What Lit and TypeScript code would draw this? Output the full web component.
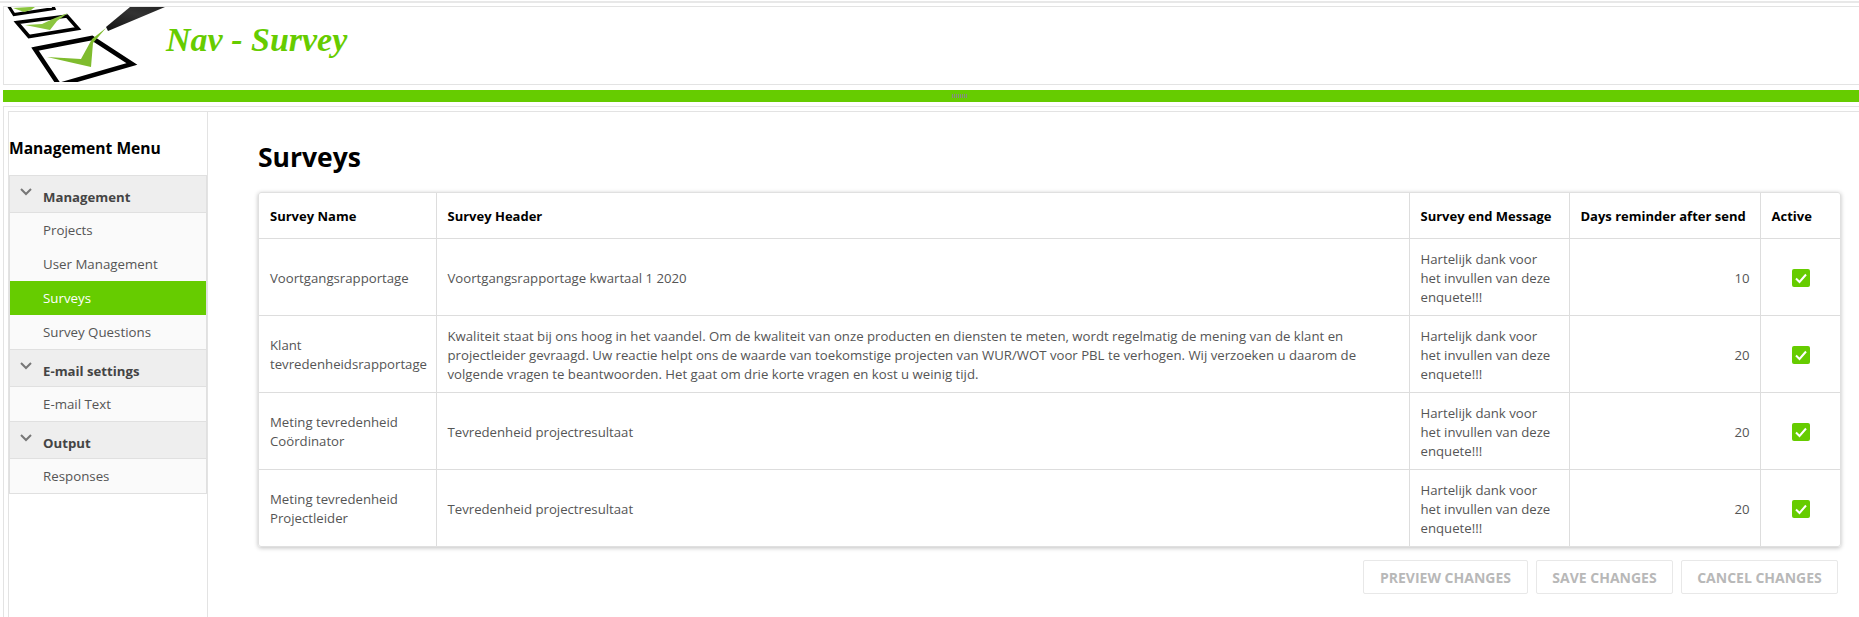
import { LitElement, html, css, svg } from "lit";
import { customElement } from "lit/decorators.js";

const THANKS = html`Hartelijk dank voor<br />het invullen van deze<br />enquete!!!`;

const ROWS = [
  { name: html`Voortgangsrapportage`, header: html`Voortgangsrapportage kwartaal 1 2020`, days: 10 },
  {
    name: html`Klant<br />tevredenheidsrapportage`,
    header: html`Kwaliteit staat bij ons hoog in het vaandel. Om de kwaliteit van onze producten en diensten te meten, wordt regelmatig de mening van de klant en<br />projectleider gevraagd. Uw reactie helpt ons de waarde van toekomstige projecten van WUR/WOT voor PBL te verhogen. Wij verzoeken u daarom de<br />volgende vragen te beantwoorden. Het gaat om drie korte vragen en kost u weinig tijd.`,
    days: 20,
  },
  { name: html`Meting tevredenheid<br />Coördinator`, header: html`Tevredenheid projectresultaat`, days: 20 },
  { name: html`Meting tevredenheid<br />Projectleider`, header: html`Tevredenheid projectresultaat`, days: 20 },
];

const MENU = [
  { title: "Management", items: ["Projects", "User Management", "Surveys", "Survey Questions"] },
  { title: "E-mail settings", items: ["E-mail Text"] },
  { title: "Output", items: ["Responses"] },
];

const logo = svg`
  <defs>
    <linearGradient id="pen" x1="0" y1="1" x2="1" y2="0">
      <stop offset="0" stop-color="#111" />
      <stop offset="0.6" stop-color="#333" />
      <stop offset="1" stop-color="#222" />
    </linearGradient>
  </defs>
  <path d="M2 -5 L47 -5 L50 1.500 L10 7.500 Z" fill="#fff" stroke="#000" stroke-width="3" />
  <path d="M9 1 L26 0 L31 0 L27 3 L20 5 Z" fill="#8cc63f" />
  <path d="M13 15.500 L63 9 L74 21.500 L25 29.500 Z" fill="#fff" stroke="#000" stroke-width="3.500" />
  <path d="M21 18 L38 17 L51 11 L64 6 L53 14 L46 23 Z" fill="#8cc63f" />
  <path d="M31 42 L88 31 L128 57 L55 78 Z" fill="#fff" stroke="#000" stroke-width="4.500" />
  <path d="M43 50 L77 52 L88 32 L102 21 L89 36 L87 60 Z" fill="#7fbc2e" />
  <path d="M102 20 L126 0 L161 0 L104 24 Z" fill="url(#pen)" />
`;

@customElement("app-root")
export class AppRoot extends LitElement {
  static styles = css`
    :host {
      display: block;
      width: 100%;
      height: 617px;
      overflow: hidden;
      background: #fff;
      font-family: "Open Sans", "Noto Sans", sans-serif;
      font-size: 13.3px;
      color: #555;
    }
    .page {
      width: 1916px;
      height: 617px;
      padding: 1px 0 0 3px;
      box-sizing: border-box;
      display: flex;
      flex-direction: column;
    }
    .topline {
      height: 2px;
      margin-left: -3px;
      background: #e8e8e8;
      flex: none;
    }
    .header {
      flex: none;
      height: 79px;
      margin-top: 3px;
      box-sizing: border-box;
      border: 1px solid #e3e3e3;
      display: flex;
      overflow: hidden;
    }
    .logo {
      flex: none;
      width: 165px;
      height: 75px;
    }
    .brand {
      margin: 13px 0 0 -3px;
      font-family: "Liberation Serif", serif;
      font-style: italic;
      font-weight: 700;
      font-size: 34px;
      line-height: 40px;
      color: #66cc00;
      white-space: nowrap;
    }
    .bar {
      flex: none;
      height: 12px;
      margin-top: 5px;
      background: #66cc00;
      display: flex;
      align-items: center;
      padding-left: 949px;
    }
    .grip {
      width: 15px;
      height: 4px;
      background: repeating-linear-gradient(90deg, #888 0 1px, transparent 1px 2px);
    }
    .lower {
      flex: 1;
      margin-top: 4px;
      border-top: 1px solid #e3e3e3;
      border-left: 1px solid #e3e3e3;
      padding: 4px 0 0 4px;
      display: flex;
      min-height: 0;
    }
    .inner {
      flex: 1;
      border-top: 1px solid #e3e3e3;
      border-left: 1px solid #e3e3e3;
      display: flex;
      min-height: 0;
    }
    .side {
      flex: none;
      width: 198px;
      box-sizing: content-box;
      border-right: 1px solid #e3e3e3;
    }
    .side h2 {
      margin: 0;
      height: 63px;
      box-sizing: border-box;
      padding: 25px 0 0 0;
      font-size: 15.6px;
      line-height: 22px;
      font-weight: 700;
      color: #000;
      white-space: nowrap;
    }
    .menu {
      border: 1px solid #e0e0e0;
      border-top: none;
    }
    .group {
      height: 38px;
      box-sizing: border-box;
      padding-top: 5px;
      background: #eee;
      border-top: 1px solid #e0e0e0;
      border-bottom: 1px solid #e0e0e0;
      display: flex;
      align-items: center;
      font-size: 13.2px;
      font-weight: 700;
      color: #444;
    }
    .group svg {
      width: 12px;
      height: 8px;
      margin: -10px 11px 0 10px;
      flex: none;
    }
    .item {
      height: 34px;
      box-sizing: border-box;
      padding-left: 33px;
      display: flex;
      align-items: center;
      background: #fafafa;
      font-size: 13.3px;
      color: #555;
    }
    .item.active {
      background: #66cc00;
      color: #fff;
    }
    .main {
      flex: 1;
      padding-left: 50px;
      min-width: 0;
    }
    h1 {
      margin: 0;
      height: 80px;
      box-sizing: border-box;
      padding-top: 26px;
      font-size: 26.5px;
      line-height: 38px;
      font-weight: 700;
      color: #000;
    }
    .tablewrap {
      width: 1583px;
      box-sizing: border-box;
      border: 1px solid #e0e0e0;
      border-radius: 3px;
      box-shadow: 0 1px 4px rgba(0, 0, 0, 0.25);
      overflow: hidden;
    }
    table {
      width: 1581px;
      table-layout: fixed;
      border-collapse: collapse;
    }
    .c1 { width: 177px; }
    .c2 { width: 973px; }
    .c3 { width: 160px; }
    .c4 { width: 191px; }
    .c5 { width: 80px; }
    th, td {
      box-sizing: border-box;
      border: 1px solid #ddd;
      padding: 3px 10px 0 11px;
      text-align: left;
      font-size: 13.2px;
      line-height: 19px;
      white-space: nowrap;
      overflow: hidden;
    }
    tr > :first-child { border-left: none; }
    tr > :last-child { border-right: none; }
    thead tr:first-child th { border-top: none; }
    tbody tr:last-child td { border-bottom: none; }
    th {
      height: 45px;
      padding-top: 3px;
      font-size: 13px;
      font-weight: 700;
      color: #000;
    }
    td {
      height: 77px;
      color: #555;
    }
    td.num { text-align: right; }
    .check {
      display: block;
      width: 18px;
      height: 18px;
      margin: 0 0 0 20px;
    }
    .actions {
      display: flex;
      justify-content: flex-end;
      gap: 8px;
      width: 1580px;
      margin-top: 13px;
    }
    button {
      height: 34px;
      padding: 0;
      box-sizing: border-box;
      background: #fff;
      border: 1px solid #e8e8e8;
      border-radius: 2px;
      font: 700 14px "Open Sans", "Noto Sans", sans-serif;
      color: #b8b8b8;
      text-transform: uppercase;
    }
    .b1 { width: 165px; }
    .b2 { width: 137px; }
    .b3 { width: 157px; }
  `;

  render() {
    return html`
      <div class="page">
        <div class="topline"></div>
        <header class="header">
          <svg class="logo" viewBox="0 0 165 75" aria-hidden="true">${logo}</svg>
          <div class="brand">Nav - Survey</div>
        </header>
        <div class="bar"><div class="grip"></div></div>
        <div class="lower">
          <div class="inner">
            <nav class="side">
              <h2>Management Menu</h2>
              <div class="menu">
                ${MENU.map(
                  (g) => html`
                    <div class="group">
                      <svg viewBox="0 0 12 8"><path d="M1 1 L6 6 L11 1" fill="none" stroke="#777" stroke-width="2" /></svg>
                      ${g.title}
                    </div>
                    ${g.items.map(
                      (i) => html`<div class="item ${i === "Surveys" ? "active" : ""}">${i}</div>`
                    )}
                  `
                )}
              </div>
            </nav>
            <main class="main">
              <h1>Surveys</h1>
              <div class="tablewrap">
                <table>
                  <colgroup>
                    <col class="c1" /><col class="c2" /><col class="c3" /><col class="c4" /><col class="c5" />
                  </colgroup>
                  <thead>
                    <tr>
                      <th>Survey Name</th>
                      <th>Survey Header</th>
                      <th>Survey end Message</th>
                      <th>Days reminder after send</th>
                      <th>Active</th>
                    </tr>
                  </thead>
                  <tbody>
                    ${ROWS.map(
                      (r) => html`
                        <tr>
                          <td>${r.name}</td>
                          <td>${r.header}</td>
                          <td>${THANKS}</td>
                          <td class="num">${r.days}</td>
                          <td>
                            <svg class="check" viewBox="0 0 18 18">
                              <rect width="18" height="18" rx="2" fill="#66cc00" />
                              <path d="M4 9.500 L7.500 13 L14 5.500" fill="none" stroke="#fff" stroke-width="2" />
                            </svg>
                          </td>
                        </tr>
                      `
                    )}
                  </tbody>
                </table>
              </div>
              <div class="actions">
                <button class="b1">Preview changes</button>
                <button class="b2">Save changes</button>
                <button class="b3">Cancel changes</button>
              </div>
            </main>
          </div>
        </div>
      </div>
    `;
  }
}
